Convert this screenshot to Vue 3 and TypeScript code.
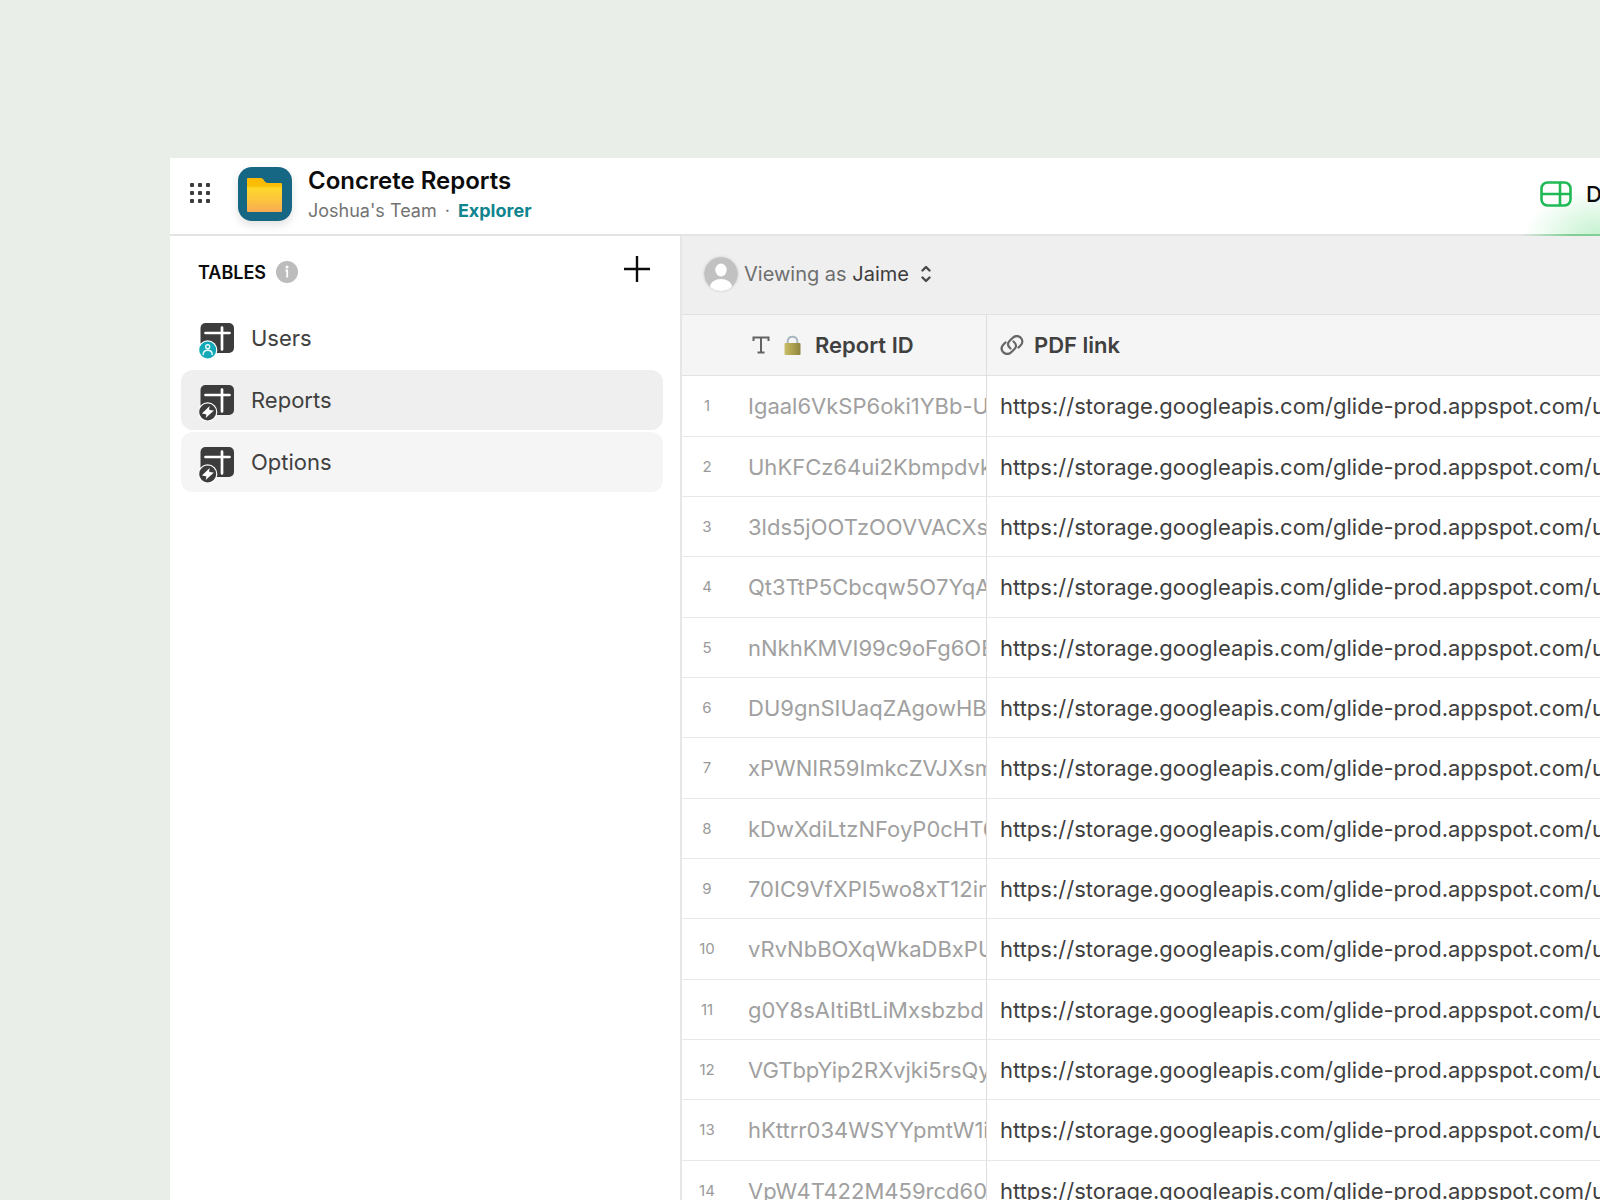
<script setup lang="ts">
interface SourceTable {
  name: string
  kind: 'users' | 'glide'
  state?: 'active' | 'hover'
}

const tables: SourceTable[] = [
  { name: 'Users', kind: 'users' },
  { name: 'Reports', kind: 'glide', state: 'active' },
  { name: 'Options', kind: 'glide', state: 'hover' },
]

const link = 'https://storage.googleapis.com/glide-prod.appspot.com/u'

const reportIds: string[] = [
  'Igaal6VkSP6oki1YBb-U',
  'UhKFCz64ui2Kbmpdvk',
  '3lds5jOOTzOOVVACXs',
  'Qt3TtP5Cbcqw5O7YqA',
  'nNkhKMVI99c9oFg6OB',
  'DU9gnSIUaqZAgowHB',
  'xPWNIR59ImkcZVJXsm',
  'kDwXdiLtzNFoyP0cHT6',
  '70IC9VfXPI5wo8xT12im',
  'vRvNbBOXqWkaDBxPU',
  'g0Y8sAItiBtLiMxsbzbd',
  'VGTbpYip2RXvjki5rsQy',
  'hKttrr034WSYYpmtW1i',
  'VpW4T422M459rcd60',
]

const gridDots = [0, 1, 2, 3, 4, 5, 6, 7, 8].map((i) => ({
  x: (i % 3) * 8 + 1,
  y: Math.floor(i / 3) * 8 + 1,
}))
</script>

<template>
  <div class="stage">
    <div class="window">
      <header class="topbar">
        <button class="icon-button" type="button" aria-label="Apps">
          <svg width="22" height="22" viewBox="0 0 22 22">
            <rect v-for="(d, i) in gridDots" :key="i" :x="d.x - 1" :y="d.y - 1" width="4" height="4" rx="1" fill="#3c3c3c" />
          </svg>
        </button>
        <div class="app-logo">
          <svg width="36" height="34" viewBox="0 0 36 34">
            <defs>
              <linearGradient id="folder-face" x1="0" y1="0" x2="0" y2="1">
                <stop offset="0" stop-color="#fbb800" />
                <stop offset="0.24" stop-color="#fbbf08" />
                <stop offset="0.3" stop-color="#fdd72c" />
                <stop offset="0.6" stop-color="#fcc83a" />
                <stop offset="1" stop-color="#f8aa55" />
              </linearGradient>
            </defs>
            <path d="M1 0h13c3 0 3 5 7 5h13q1 0 1 1v27q0 1-1 1H1q-1 0-1-1V1q0-1 1-1z" fill="url(#folder-face)" />
          </svg>
        </div>
        <div class="app-info">
          <h1>Concrete Reports</h1>
          <p>Joshua's Team<span class="dot">·</span><a href="#">Explorer</a></p>
        </div>
        <a class="nav-data" href="#">
          <svg width="32" height="26" viewBox="0 0 32 26" fill="none" stroke="#1fba56" stroke-width="2.600">
            <rect x="1.500" y="1.500" width="29" height="23" rx="6" />
            <path d="M1 13h29M20 1v24" />
          </svg>
          <span>D</span>
        </a>
      </header>

      <div class="body">
        <aside class="sidebar">
          <div class="sidebar-head">
            <h2>TABLES</h2>
            <svg width="22" height="22" viewBox="0 0 22 22">
              <circle cx="11" cy="11" r="11" fill="#bcbcbc" />
              <circle cx="11" cy="6" r="1.500" fill="#fff" />
              <path d="M9.500 9.500H11.200V16.500" stroke="#fff" stroke-width="1.800" fill="none" />
            </svg>
            <button class="icon-button add" type="button" aria-label="Add table">
              <svg width="26" height="26" viewBox="0 0 26 26">
                <path d="M13 0v26M0 13h26" stroke="#0c0c0c" stroke-width="2.400" />
              </svg>
            </button>
          </div>
          <nav>
            <a v-for="t in tables" :key="t.name" href="#" class="item" :class="t.state">
              <svg width="36" height="36" viewBox="0 0 36 36">
                <rect x="1.500" y="0" width="33.500" height="30" rx="5" fill="#3c3c3c" />
                <path d="M6.500 10h24M23 4.500v22" stroke="#fff" stroke-width="2.700" stroke-linecap="round" />
                <circle class="ring" cx="8.700" cy="27" r="9.700" />
                <template v-if="t.kind === 'users'">
                  <circle cx="8.700" cy="27" r="8.500" fill="#13a9b8" />
                  <g stroke="#e8fbfc" stroke-width="1.400" fill="none" stroke-linecap="round">
                    <circle cx="8.700" cy="23.700" r="2" />
                    <path d="M4.200 31.500c0-5.600 9-5.600 9 0" />
                  </g>
                </template>
                <template v-else>
                  <circle cx="8.700" cy="27" r="8.500" fill="#3c3c3c" />
                  <path d="M10.700 21L2.900 28.400Q6 28.800 7.400 29.600L6.700 33L14.900 25.600Q11.400 25.200 10 24.400z" fill="#fff" />
                </template>
              </svg>
              <span>{{ t.name }}</span>
            </a>
          </nav>
        </aside>

        <main class="content">
          <div class="viewer">
            <svg class="avatar" width="34" height="34" viewBox="0 0 34 34">
              <defs>
                <clipPath id="avatar-clip"><circle cx="17" cy="17" r="17" /></clipPath>
              </defs>
              <circle cx="17" cy="17" r="17" fill="#c1c1c1" />
              <g clip-path="url(#avatar-clip)" fill="#fff">
                <ellipse cx="17" cy="13" rx="5.700" ry="6.500" />
                <ellipse cx="17" cy="30" rx="11" ry="8" />
              </g>
            </svg>
            <button class="viewer-select" type="button">
              <span>Viewing as <b>Jaime</b></span>
              <svg width="10" height="18" viewBox="0 0 10 18" fill="none" stroke="#4a4a4a" stroke-width="2.400" stroke-linecap="round" stroke-linejoin="round">
                <path d="M1.500 5.500L5 2l3.500 3.500M1.500 12.500L5 16l3.500-3.500" />
              </svg>
            </button>
          </div>

          <table>
            <colgroup>
              <col class="col-num" />
              <col class="col-id" />
              <col />
            </colgroup>
            <thead>
              <tr>
                <th class="num" aria-label="Row"></th>
                <th class="id">
                  <div class="th-inner">
                    <svg width="18" height="18" viewBox="0 0 18 18" fill="none" stroke="#636363" stroke-width="2">
                      <path d="M1.500 5V1.500h15V5M9 1.500v15M5.500 16.500h7" />
                    </svg>
                    <svg class="lock" width="17" height="20" viewBox="0 0 17 20">
                      <defs>
                        <linearGradient id="brass" x1="0" y1="0" x2="1" y2="0">
                          <stop offset="0" stop-color="#c9bf6b" />
                          <stop offset="0.4" stop-color="#b3a754" />
                          <stop offset="1" stop-color="#8e843f" />
                        </linearGradient>
                      </defs>
                      <path d="M3.700 9V6.500C3.700 0 13.300 0 13.300 6.500V9" fill="none" stroke="#a9b7be" stroke-width="2" />
                      <rect x="0.500" y="8" width="16" height="12" rx="1" fill="url(#brass)" />
                    </svg>
                    <span>Report ID</span>
                  </div>
                </th>
                <th class="pdf">
                  <div class="th-inner">
                    <svg width="24" height="20" viewBox="0 0 24 20" fill="none" stroke="#666" stroke-width="2.200" stroke-linecap="round">
                      <path d="M10.500 13.500C7 10.500 7.500 8 9.500 6l3-3c3-3 6-2 8-.5 2.500 2.500 2.500 5.500 0 8l-2 2" />
                      <path d="M13.500 6.500c3.500 3 3 5.500 1 7.500l-3 3c-3 3-6 2-8 .5-2.500-2.500-2.500-5.500 0-8l2-2" />
                    </svg>
                    <span>PDF link</span>
                  </div>
                </th>
              </tr>
            </thead>
            <tbody>
              <tr v-for="(id, i) in reportIds" :key="id">
                <td class="num">{{ i + 1 }}</td>
                <td class="id">{{ id }}</td>
                <td class="pdf">{{ link }}</td>
              </tr>
            </tbody>
          </table>
        </main>
      </div>
    </div>
  </div>
</template>

<style>
body {
  background: #e9eee8;
}
</style>

<style scoped>
.stage {
  box-sizing: border-box;
  height: 100vh;
  overflow: hidden;
  padding: 158px 0 0 170px;
  background: #e9eee8;
  font-family: Inter, 'Liberation Sans', sans-serif;
  color: #404040;
}
.window {
  display: flex;
  flex-direction: column;
  height: 100%;
  background: #fff;
}
h1,
h2,
p {
  margin: 0;
}
a {
  color: inherit;
  text-decoration: none;
}
svg {
  display: block;
  flex: none;
}
button {
  padding: 0;
  border: 0;
  background: none;
  color: inherit;
  font: inherit;
  cursor: pointer;
}
.topbar {
  display: flex;
  align-items: center;
  flex: none;
  height: 72px;
  padding: 0 0 4px 20px;
  border-bottom: 2px solid #e4e4e4;
}
.icon-button {
  flex: none;
}
.app-logo {
  display: flex;
  align-items: center;
  justify-content: center;
  width: 54px;
  height: 54px;
  margin: 0 16px 0 26px;
  padding-top: 2px;
  box-sizing: border-box;
  border-radius: 14px;
  background: #166784;
  box-shadow: 0 4px 10px rgba(0, 0, 0, 0.12);
}
.app-info {
  flex: 1;
  padding-top: 4px;
}
h1 {
  font-size: 24px;
  line-height: 30px;
  font-weight: 600;
  color: #0c0c0c;
}
.app-info p {
  font-size: 18px;
  line-height: 30px;
  color: #737373;
}
.dot {
  margin: 0 8px;
}
.app-info a {
  font-weight: 700;
  color: #10848f;
}
.nav-data {
  display: flex;
  align-items: center;
  gap: 14px;
  width: 60px;
  align-self: stretch;
  margin-bottom: -6px;
  padding: 0 0 6px 20px;
  background:
    linear-gradient(90deg, rgba(130, 206, 150, 0), #82ce96 50px) 0 100% / 100% 2px no-repeat,
    radial-gradient(ellipse 76px 48px at 80px 100%, #c4f2cf, rgba(255, 255, 255, 0));
  font-size: 22px;
  font-weight: 500;
  color: #0c0c0c;
}
.body {
  display: flex;
  flex: 1;
  min-height: 0;
}
.sidebar {
  flex: none;
  box-sizing: border-box;
  width: 512px;
  padding: 0 17px 0 11px;
  border-right: 2px solid #e6e6e6;
}
.sidebar-head {
  display: flex;
  align-items: center;
  gap: 10px;
  height: 72px;
  padding: 0 13px 0 17px;
}
h2 {
  font-size: 18px;
  font-weight: 600;
  color: #0c0c0c;
}
.add {
  margin: 0 0 6px auto;
}
nav {
  display: flex;
  flex-direction: column;
  gap: 2px;
}
.item {
  display: flex;
  align-items: center;
  gap: 16px;
  height: 60px;
  padding-left: 18px;
  border-radius: 12px;
  font-size: 22px;
}
.item svg {
  margin-top: 6px;
}
.ring {
  fill: #fff;
}
.active {
  background: #efefef;
}
.hover {
  background: #f5f5f5;
}
.content {
  flex: 1;
  min-width: 0;
  overflow: hidden;
}
.viewer {
  display: flex;
  align-items: center;
  gap: 6px;
  box-sizing: border-box;
  height: 78px;
  padding: 0 0 2px 22px;
  background: #efefef;
}
.avatar {
  border-radius: 50%;
  box-shadow: 0 0 3px rgba(0, 0, 0, 0.15);
}
.viewer-select {
  display: flex;
  align-items: center;
  gap: 12px;
  font-size: 20px;
  color: #6e6e6e;
}
.viewer-select b {
  font-weight: 400;
  color: #3c3c3c;
}
table {
  width: 100%;
  table-layout: fixed;
  border-spacing: 0;
}
.col-num {
  width: 50px;
}
.col-id {
  width: 255px;
}
th,
td {
  box-sizing: border-box;
  height: 60px;
  padding: 0;
  overflow: hidden;
  border-bottom: 1px solid #e8e8e8;
  font-size: 22px;
  line-height: 28px;
  text-align: left;
  white-space: nowrap;
}
th {
  height: 62px;
  border-top: 1px solid #e2e2e2;
  border-bottom-color: #e2e2e2;
  background: #f5f5f5;
  font-weight: 600;
}
/* every third row carries the spare pixel of the row pitch */
tbody tr:nth-child(3n + 1) td {
  height: 61px;
}
.num {
  font-size: 15px;
  text-align: center;
  color: #9a9a9a;
}
.id {
  padding-left: 16px;
  border-right: 1px solid #dedede;
}
td.id {
  color: #a0a0a0;
}
.pdf {
  padding-left: 13px;
}
.th-inner {
  display: flex;
  align-items: center;
  gap: 10px;
}
.id .th-inner {
  gap: 14px;
  padding-left: 4px;
}
</style>
